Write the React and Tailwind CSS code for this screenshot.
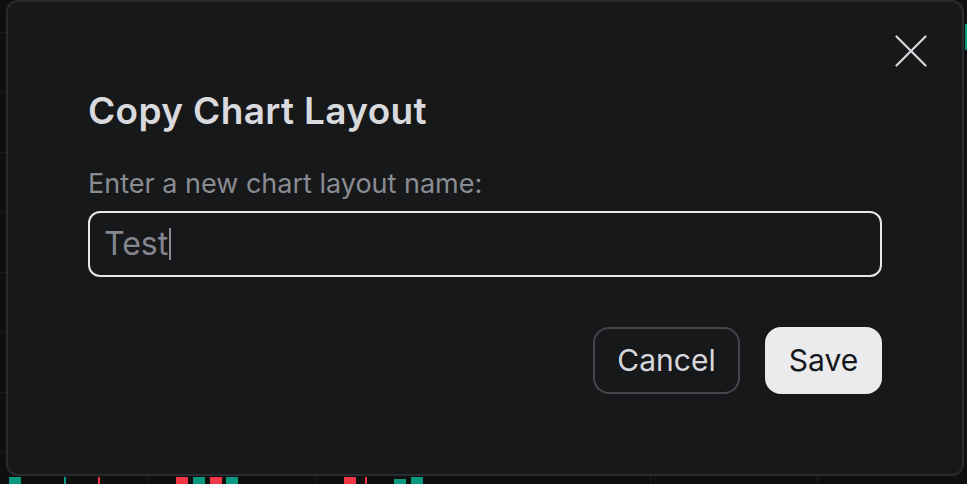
import React from "react";

const FONT = { fontFamily: 'Inter, "Noto Sans", "Liberation Sans", sans-serif' };

// candle fragments peeking out below the dialog: [left, width, top, color]
const CANDLES = [
  [9, 12, 477, "#089981"],
  [64, 2, 477, "#089981"],
  [98, 2, 477, "#f23645"],
  [176, 12, 477, "#f23645"],
  [193, 12, 477, "#089981"],
  [210, 12, 477, "#f23645"],
  [226, 12, 477, "#089981"],
  [344, 12, 477, "#f23645"],
  [365, 2, 477, "#f23645"],
  [394, 12, 479, "#089981"],
  [411, 12, 477, "#089981"],
];

function ChartBackdrop() {
  return (
    <div className="absolute inset-0">
      {[32, 92, 152, 212, 272, 332, 392, 452].map((y) => (
        <div key={y} className="absolute left-0 right-0 h-px bg-[#1c1d20]" style={{ top: y }} />
      ))}
      {[148, 315, 650, 817].map((x) => (
        <div key={x} className="absolute top-0 bottom-0 w-px bg-[#1c1d20]" style={{ left: x }} />
      ))}
      {CANDLES.map(([l, w, t, c], i) => (
        <div key={i} className="absolute bottom-0" style={{ left: l, width: w, top: t, background: c }} />
      ))}
      <div className="absolute left-[417px] top-[477px] w-px h-[7px] bg-[#089981]" />
      <div className="absolute left-[965px] top-[24px] w-[2px] h-[26px] bg-[#089981]" />
    </div>
  );
}

export default function App() {
  return (
    <div className="relative w-[967px] h-[484px] overflow-hidden bg-[#0f0f10]" style={FONT}>
      <ChartBackdrop />

      <div className="absolute left-[6px] top-0 w-[958px] h-[476px] rounded-[12px] border-2 border-[#2a2b2e] bg-[#17181a] flex flex-col pl-[80px] pr-[80px]">
        <button className="absolute right-[34px] top-[32px] w-[34px] h-[34px] flex items-center justify-center text-[#d8d9dd]">
          <svg width="32" height="32" viewBox="0 0 32 32" fill="none" stroke="currentColor" strokeWidth="2.2" strokeLinecap="round">
            <path d="M1.5 1.5L30.5 30.5M30.5 1.5L1.5 30.5" />
          </svg>
        </button>

        <h1 className="mt-[86px] text-[37px] leading-[46px] font-semibold tracking-[0.35px] text-[#d9dade]">
          Copy Chart Layout
        </h1>

        <label className="mt-[33px] text-[27px] leading-[34px] text-[#8a8c93]">
          Enter a new chart layout name:
        </label>

        <div className="mt-[10px] h-[66px] rounded-[12px] border-2 border-[#e6e7ea] flex items-center pl-[14px]">
          <span className="text-[32px] leading-[40px] text-[#85878e]">Test</span>
          <span className="w-[2px] h-[32px] bg-[#8a8c93] ml-[1px]" />
        </div>

        <div className="mt-[50px] flex justify-end gap-[25px]">
          <button className="h-[67px] w-[147px] rounded-[16px] border-2 border-[#45464b] text-[30px] text-[#d6d7db]">
            Cancel
          </button>
          <button className="h-[67px] w-[117px] rounded-[16px] bg-[#ebebed] text-[30px] text-[#16171a]">
            Save
          </button>
        </div>
      </div>
    </div>
  );
}
